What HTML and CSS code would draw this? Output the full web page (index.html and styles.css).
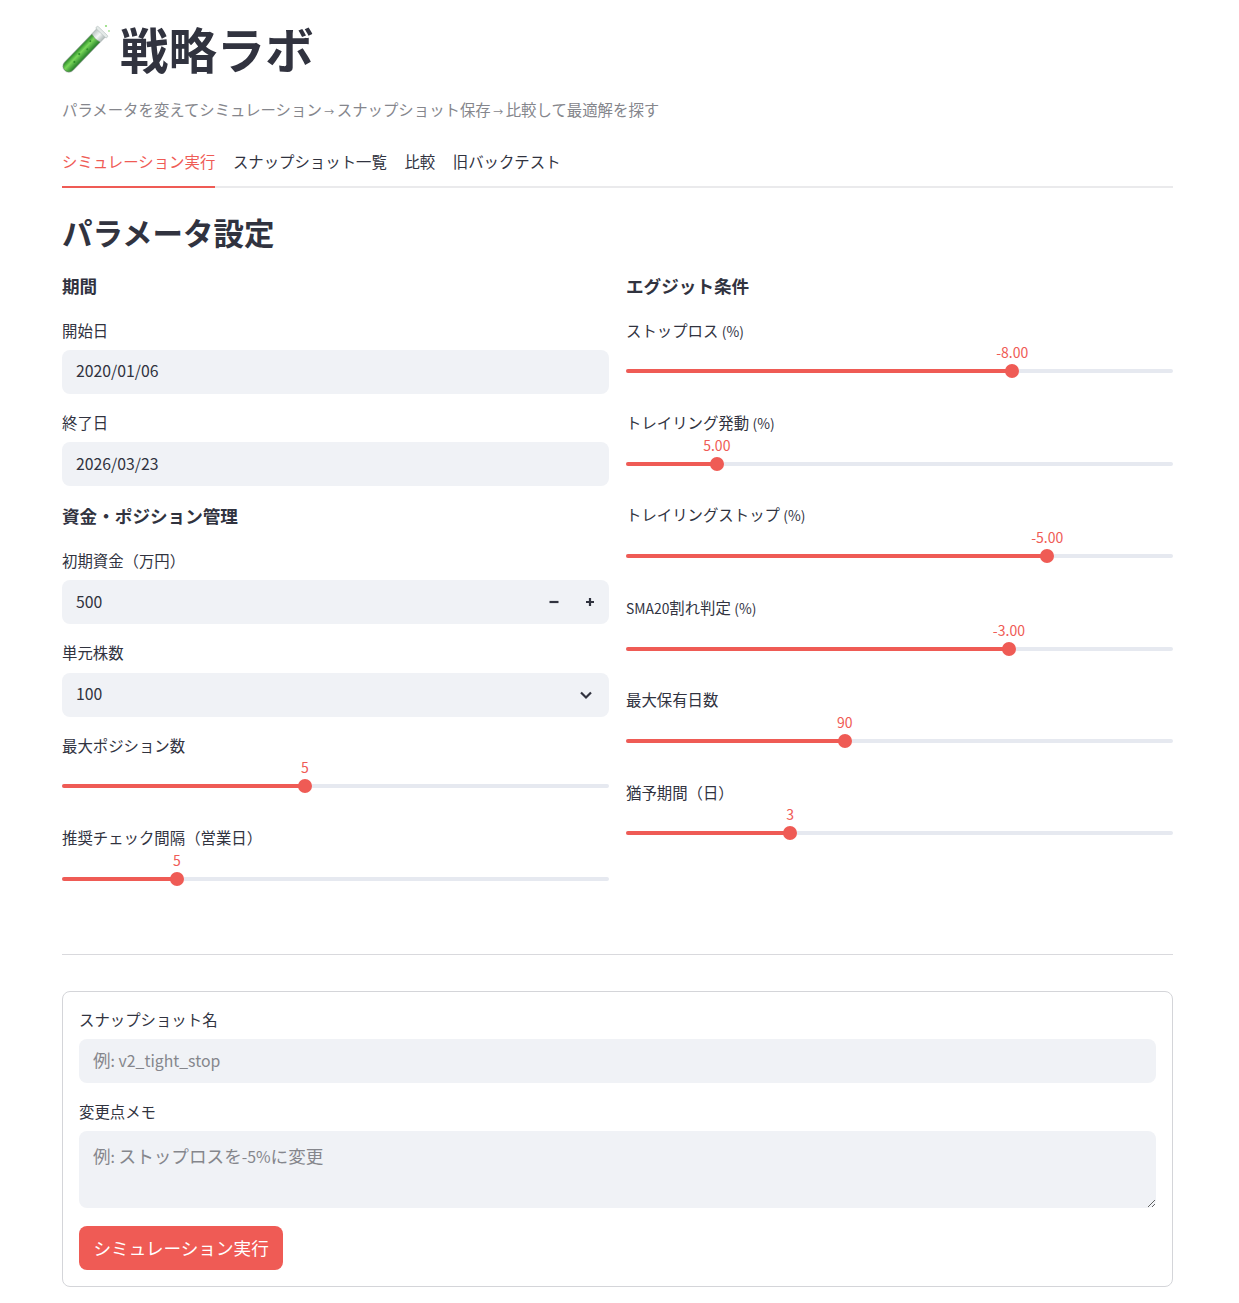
FILE: index.html
```html
<!DOCTYPE html>
<html lang="ja">
<head>
  <meta charset="UTF-8">
  <title>戦略ラボ</title>
  <link rel="stylesheet" href="styles.css">
</head>
<body>
  <main class="page">
    <h1 class="title">
      <svg class="title-icon" width="48" height="48" viewBox="0 0 48 48">
        <defs>
          <linearGradient id="liquid" x1="0" y1="0" x2="1" y2="0">
            <stop offset="0" stop-color="#2b8a2a"/>
            <stop offset="0.4" stop-color="#7ad85a"/>
            <stop offset="1" stop-color="#26802a"/>
          </linearGradient>
          <linearGradient id="glass" x1="0" y1="0" x2="1" y2="0">
            <stop offset="0" stop-color="#b9c4c2"/>
            <stop offset="0.5" stop-color="#f4f7f6"/>
            <stop offset="1" stop-color="#aeb9b7"/>
          </linearGradient>
        </defs>
        <g transform="translate(-0.5 1) rotate(44 24 24)">
          <path d="M18 1h12v47a6 6 0 0 1 -12 0z" fill="url(#glass)" stroke="#9aa5a3" stroke-width="0.5"/>
          <path d="M18.5 9q5.500 2 11 0v39a5.500 5.500 0 0 1 -11 0z" fill="url(#liquid)" stroke="#3c7a35" stroke-width="0.5"/>
          <rect x="16.5" y="-1" width="15" height="3" rx="1.5" fill="#e4eae8" stroke="#a9b5b3" stroke-width="0.5"/>
          <circle cx="22" cy="15" r="1" fill="#2f8f2a"/>
          <circle cx="25.500" cy="23" r="1" fill="#2f8f2a"/>
          <circle cx="23" cy="32" r="1.100" fill="#2f8f2a"/>
          <circle cx="25" cy="41" r="1.100" fill="#2f8f2a"/>
        </g>
        <circle cx="44" cy="2" r="1.100" fill="#8fdc78"/>
        <circle cx="47" cy="7" r="0.900" fill="#a8e596"/>
      </svg>
      <span>戦略ラボ</span>
    </h1>
    <p class="subtitle">パラメータを変えてシミュレーション<span class="arrow">→</span>スナップショット保存<span class="arrow">→</span>比較して最適解を探す</p>

    <nav class="tabs">
      <a class="tab active">シミュレーション実行</a>
      <a class="tab">スナップショット一覧</a>
      <a class="tab">比較</a>
      <a class="tab">旧バックテスト</a>
    </nav>

    <h2 class="section-title">パラメータ設定</h2>

    <div class="columns">
      <section class="column">
        <h4 class="group-title">期間</h4>
        <div class="field">
          <label class="field-label">開始日</label>
          <input class="control control-latin" type="text" value="2020/01/06">
        </div>
        <div class="field">
          <label class="field-label">終了日</label>
          <input class="control control-latin" type="text" value="2026/03/23">
        </div>

        <h4 class="group-title">資金・ポジション管理</h4>
        <div class="field">
          <label class="field-label">初期資金（万円）</label>
          <div class="control control-row control-latin">
            <span>500</span>
            <div class="steppers">
              <svg width="10" height="10" viewBox="0 0 10 10"><path d="M0.500 5h9" stroke="#31333f" stroke-width="2.200"/></svg>
              <svg width="10" height="10" viewBox="0 0 10 10"><path d="M1 5h8M5 1v8" stroke="#31333f" stroke-width="2.200"/></svg>
            </div>
          </div>
        </div>
        <div class="field">
          <label class="field-label">単元株数</label>
          <div class="control control-row control-latin">
            <span>100</span>
            <svg class="chevron" width="14" height="10" viewBox="0 0 14 10"><path d="M2 2.500l5 5 5-5" fill="none" stroke="#31333f" stroke-width="2.200"/></svg>
          </div>
        </div>
        <div class="field">
          <label class="field-label">最大ポジション数</label>
          <div class="slider">
            <div class="slider-fill" style="width: 44.4%"></div>
            <div class="slider-thumb" style="left: 44.4%"><span class="slider-value">5</span></div>
          </div>
        </div>
        <div class="field">
          <label class="field-label">推奨チェック間隔（営業日）</label>
          <div class="slider">
            <div class="slider-fill" style="width: 21%"></div>
            <div class="slider-thumb" style="left: 21%"><span class="slider-value">5</span></div>
          </div>
        </div>
      </section>

      <section class="column">
        <h4 class="group-title">エグジット条件</h4>
        <div class="field">
          <label class="field-label">ストップロス <span class="latin">(%)</span></label>
          <div class="slider">
            <div class="slider-fill" style="width: 70.6%"></div>
            <div class="slider-thumb" style="left: 70.6%"><span class="slider-value">-8.00</span></div>
          </div>
        </div>
        <div class="field">
          <label class="field-label">トレイリング発動 <span class="latin">(%)</span></label>
          <div class="slider">
            <div class="slider-fill" style="width: 16.6%"></div>
            <div class="slider-thumb" style="left: 16.6%"><span class="slider-value">5.00</span></div>
          </div>
        </div>
        <div class="field">
          <label class="field-label">トレイリングストップ <span class="latin">(%)</span></label>
          <div class="slider">
            <div class="slider-fill" style="width: 77%"></div>
            <div class="slider-thumb" style="left: 77%"><span class="slider-value">-5.00</span></div>
          </div>
        </div>
        <div class="field">
          <label class="field-label"><span class="latin">SMA20</span>割れ判定 <span class="latin">(%)</span></label>
          <div class="slider">
            <div class="slider-fill" style="width: 70%"></div>
            <div class="slider-thumb" style="left: 70%"><span class="slider-value">-3.00</span></div>
          </div>
        </div>
        <div class="field">
          <label class="field-label">最大保有日数</label>
          <div class="slider">
            <div class="slider-fill" style="width: 40%"></div>
            <div class="slider-thumb" style="left: 40%"><span class="slider-value">90</span></div>
          </div>
        </div>
        <div class="field">
          <label class="field-label">猶予期間（日）</label>
          <div class="slider">
            <div class="slider-fill" style="width: 30%"></div>
            <div class="slider-thumb" style="left: 30%"><span class="slider-value">3</span></div>
          </div>
        </div>
      </section>
    </div>

    <hr class="divider">

    <form class="run-form">
      <div class="field">
        <label class="field-label">スナップショット名</label>
        <div class="control control-row placeholder"><span>例<span class="latin">: v2_tight_stop</span></span></div>
      </div>
      <div class="field field-memo">
        <label class="field-label">変更点メモ</label>
        <div class="control memo placeholder">例<span class="latin">: </span>ストップロスを<span class="latin">-5%</span>に変更</div>
      </div>
      <button type="button" class="btn">シミュレーション実行</button>
    </form>
  </main>
</body>
</html>
```

FILE: styles.css
```css
:root {
  --primary-color: #ef5b55;
  --text-color: #31333f;
  --muted-color: #85868c;
  --field-color: #f0f2f6;
  --track-color: #e6e9f0;
}

* {
  box-sizing: border-box;
}

body {
  font-family: "Noto Sans CJK JP", "Noto Sans", sans-serif;
  margin: 0;
  padding: 0;
  background: white;
  color: var(--text-color);
  font-size: 15.4px;
}

.page {
  width: 1111px;
  margin-left: 62px;
  padding-top: 12px;
  padding-bottom: 16px;
}

.latin {
  font-size: 0.9em;
}

.title {
  display: flex;
  align-items: center;
  gap: 10px;
  height: 72px;
  margin: 0;
  font-size: 48.4px;
  font-weight: 700;
  line-height: 72px;
}

.title-icon {
  flex: none;
  overflow: visible;
}

.subtitle {
  margin: 13px 0 0;
  height: 24px;
  line-height: 24px;
  color: var(--muted-color);
  font-size: 15.4px;
}

.arrow {
  margin: 0 2.5px;
  font-size: 10px;
}

.tabs {
  display: flex;
  gap: 17.6px;
  margin-top: 13px;
  border-bottom: 2px solid #eaeaec;
  height: 54px;
}

.tab {
  height: 54px;
  line-height: 54px;
  white-space: nowrap;
}

.tab.active {
  color: var(--primary-color);
  border-bottom: 2px solid var(--primary-color);
}

.section-title {
  margin: 20px 0 0;
  height: 48px;
  line-height: 48px;
  font-size: 30.5px;
  font-weight: 700;
}

.columns {
  display: grid;
  grid-template-columns: 547px 547px;
  gap: 17px;
  height: 698px;
}

.group-title {
  margin: 0;
  height: 45.4px;
  line-height: 20px;
  font-size: 17.6px;
  font-weight: 700;
}

.column {
  padding-top: 20.2px;
}

.field {
  height: 92.4px;
}

.field-label {
  display: block;
  height: 28.4px;
  line-height: 16px;
  font-size: 15.4px;
}

.control {
  display: block;
  width: 100%;
  height: 44px;
  padding: 0 14px 2px;
  border: none;
  border-radius: 8px;
  background: var(--field-color);
  color: var(--text-color);
  font-family: inherit;
  font-size: 17.6px;
  outline: none;
}

.control-latin {
  font-size: 15.8px;
}

.control-row {
  display: flex;
  align-items: center;
  justify-content: space-between;
  padding-bottom: 0;
}

.control-row > span {
  margin-bottom: 2px;
}

.placeholder {
  color: var(--muted-color);
}

.steppers {
  display: flex;
  gap: 26px;
}

.chevron {
  margin-right: 2px;
}

.slider {
  position: relative;
  height: 4px;
  margin-top: 19.5px;
  border-radius: 2px;
  background: var(--track-color);
}

.slider-fill {
  height: 4px;
  border-radius: 2px;
  background: var(--primary-color);
}

.slider-thumb {
  position: absolute;
  top: -5px;
  width: 14px;
  height: 14px;
  margin-left: -7px;
  border-radius: 50%;
  background: var(--primary-color);
}

.slider-value {
  position: absolute;
  left: 50%;
  bottom: 17px;
  transform: translateX(-50%);
  color: var(--primary-color);
  font-size: 14px;
  line-height: 18px;
  white-space: nowrap;
}

.divider {
  margin: 0;
  border: none;
  border-top: 1px solid #d9d9dd;
}

.run-form {
  margin-top: 36px;
  height: 296px;
  padding: 18.5px 16px 0;
  border: 1px solid #d4d5d9;
  border-radius: 8px;
}

.memo {
  height: 77px;
  padding-top: 12px;
  padding-bottom: 12px;
  overflow: auto;
  resize: vertical;
}

.field-memo {
  height: auto;
}

.btn {
  display: block;
  margin-top: 18px;
  height: 44px;
  padding: 0 14.5px 2px;
  border: none;
  border-radius: 8px;
  background: var(--primary-color);
  color: white;
  font-family: inherit;
  font-size: 17.6px;
}
```
